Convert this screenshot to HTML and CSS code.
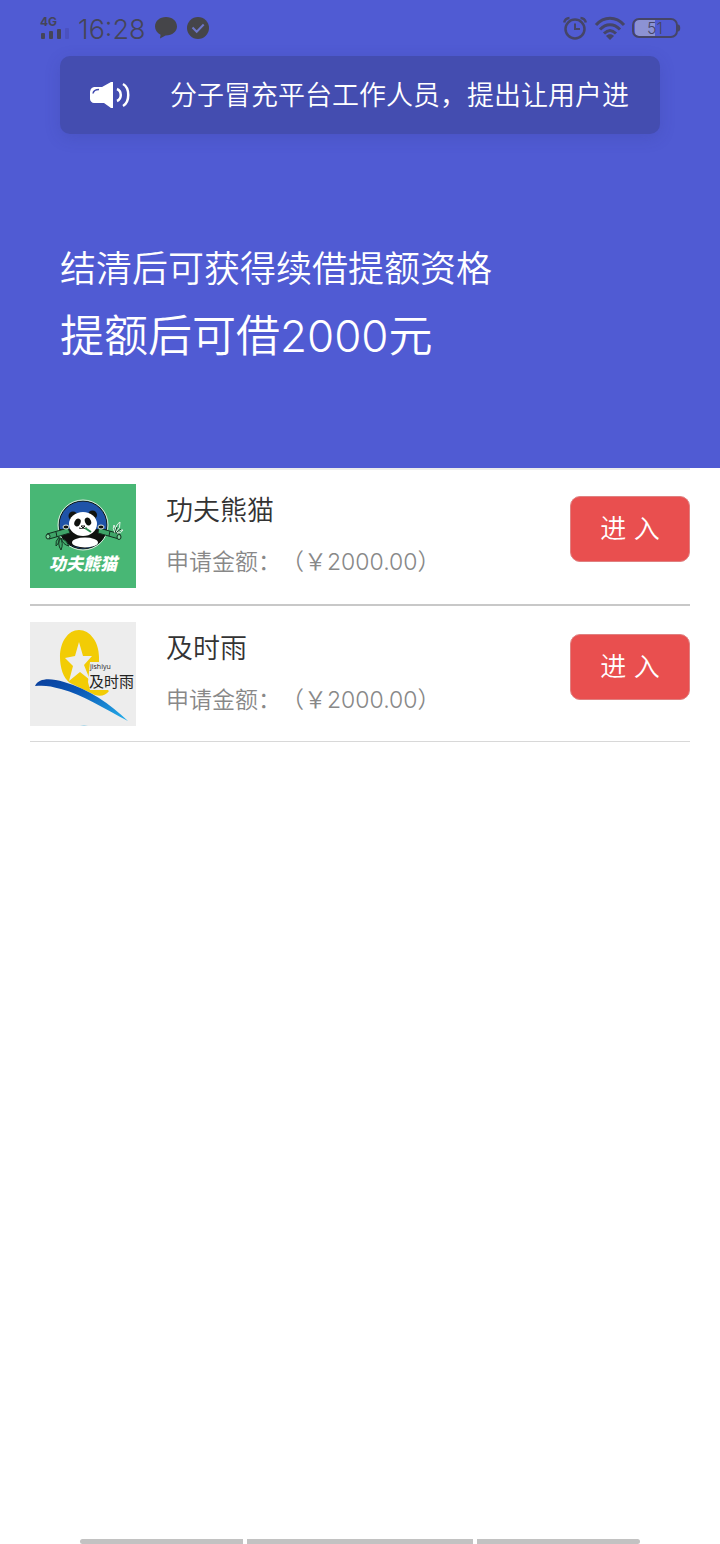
FILE: index.html
```html
<!DOCTYPE html>
<html lang="zh-CN">
<head>
  <meta charset="UTF-8">
  <meta name="viewport" content="width=device-width, initial-scale=1">
  <title>借款</title>
  <link rel="stylesheet" href="styles.css">
</head>
<body>
  <header class="hero">
    <div class="status-bar">
      <div class="status-left">
        <div class="signal">
          <span class="network">4G</span>
          <svg width="30" height="12" viewBox="0 0 30 12">
            <g fill="#454558">
              <rect x="1" y="5" width="4" height="6" rx="1"/>
              <rect x="9" y="3" width="4" height="8" rx="1"/>
              <rect x="17" y="1" width="4" height="10" rx="1"/>
            </g>
            <rect x="25" y="0" width="4" height="11" rx="1" fill="#4a51c0"/>
          </svg>
        </div>
        <span class="time">16:28</span>
        <svg width="24" height="24" viewBox="0 0 24 24">
          <path fill="#454549" d="M12 1C5.600 1 1 5 1 10.500c0 3.600 2.200 6.600 5.600 8.200L6 22.500l5.500-3.100C18.300 19.500 23 15.500 23 10.500 23 5 18.400 1 12 1z"/>
        </svg>
        <svg width="24" height="24" viewBox="0 0 24 24">
          <circle cx="12" cy="12" r="11" fill="#454549"/>
          <path d="M6.500 11.500l4.200 4.300 7-7.300" fill="none" stroke="#6d76c8" stroke-width="2"/>
        </svg>
      </div>
      <div class="status-right">
        <svg width="26" height="26" viewBox="0 0 26 26" fill="none" stroke="#454567">
          <circle cx="13" cy="14" r="9.500" stroke-width="2.500"/>
          <path d="M13 8.500V14h5" stroke-width="2"/>
          <path d="M2.200 7.500C2.800 4.800 5 3.200 7.500 3M18.500 3c2.500.2 4.700 1.800 5.300 4.500" stroke-width="2.500"/>
        </svg>
        <svg width="32" height="26" viewBox="0 0 32 26" fill="none" stroke="#454567" stroke-width="3">
          <path d="M2 10C10 1 22 1 30 10"/>
          <path d="M6 14.500c6-6.500 14-6.500 20 0"/>
          <path d="M10 18.500c4-4 8-4 12 0"/>
          <path d="M12 21c2-2.500 6-2.500 8 0L16 25z" fill="#454567" stroke="none"/>
        </svg>
        <svg width="50" height="24" viewBox="0 0 50 24">
          <path d="M7 4h16v16H7q-4 0-4-4V8q0-4 4-4z" fill="#8c92d4"/>
          <rect x="1" y="3" width="44" height="18" rx="6" fill="none" stroke="#454567" stroke-width="2"/>
          <path d="M46 8.500c3 0 3 7 0 7z" fill="#454567"/>
          <text x="23" y="18" class="battery-text">51</text>
        </svg>
      </div>
    </div>

    <div class="notice">
      <svg class="speaker" width="42" height="28" viewBox="0 0 42 28">
        <path fill="#fff" d="M23 0v26h-2l-7-5H4c-2 0-4-2-4-4v-6c0-4 2-6 5-6h7l9-5z"/>
        <path d="M3 11.500C3.500 8.500 5 7.500 9 7.500" fill="none" stroke="#444db0" stroke-width="1.500"/>
        <path d="M27 7c5 2 5 10 0 12M33 2c7 4 7 18 0 22" fill="none" stroke="#fff" stroke-width="2.500"/>
      </svg>
      <div class="notice-text">分子冒充平台工作人员，提出让用户进</div>
    </div>

    <div class="hero-text">
      <p class="hero-sub">结清后可获得续借提额资格</p>
      <p class="hero-title">提额后可借2000元</p>
    </div>
  </header>

  <main class="list">
    <section class="item">
      <svg class="logo" width="106" height="104" viewBox="0 0 106 104">
        <rect width="106" height="104" fill="#48b775"/>
        <circle cx="53" cy="41" r="24" fill="#1f53a8" stroke="#10120f" stroke-width="1"/>
        <circle cx="53" cy="41" r="25" fill="none" stroke="#dce8df" stroke-width="1"/>
        <path d="M30 45h46c1 10-10 19-23 19S29 55 30 45z" fill="#10120f"/>
        <ellipse cx="55" cy="58.500" rx="13" ry="5" fill="#fff"/>
        <g stroke="#12301f" stroke-width="1">
          <path d="M17 50l21-6 2 5-21 6z" fill="#3fa568"/>
          <path d="M69 44l21 6-1 5-21-6z" fill="#3fa568"/>
          <path d="M26 48l1 5M80 47l-1 5" fill="none"/>
          <ellipse cx="18" cy="52.500" rx="2" ry="2.500" fill="#7cd39b"/>
          <ellipse cx="89" cy="53" rx="2" ry="2.500" fill="#7cd39b"/>
        </g>
        <ellipse cx="36" cy="43" rx="3" ry="2" fill="#10120f" stroke="#dce8df"/>
        <ellipse cx="71" cy="43" rx="3" ry="2" fill="#10120f" stroke="#dce8df"/>
        <circle cx="43" cy="32" r="4.500" fill="#10120f"/>
        <circle cx="62.500" cy="31" r="4.500" fill="#10120f"/>
        <ellipse cx="53" cy="40" rx="14" ry="12" fill="#fff"/>
        <ellipse cx="47.500" cy="38.500" rx="3" ry="4" fill="#10120f" transform="rotate(25 47.500 38.500)"/>
        <ellipse cx="58" cy="37.500" rx="3" ry="4" fill="#10120f" transform="rotate(-25 58 37.500)"/>
        <path d="M51 42h4l-2 2zM49 44q3 1 4 0 2 1 4 0" fill="none" stroke="#10120f"/>
        <path d="M55 44l6 4" stroke="#2b8c50" stroke-width="2"/>
        <g fill="#3fa568" stroke="#163a25" stroke-width="1">
          <path d="M29 53q-4 4-3 9 4-3 3-9zM30 54q-3 6 1 12 3-7-1-12zM31 54q2 7 8 8-2-6-8-8z"/>
        </g>
        <g fill="#48b775" stroke="#e2efe5">
          <path d="M85 49q-3-5-1-8 3 4 1 8zM86 48q-1-7 4-10 1 6-4 10zM87 49q3-4 6-3-2 4-6 3z"/>
          <path d="M85 49l2-6M87 48l4-3" stroke="#163a25"/>
        </g>
        <text x="19" y="86" class="panda-text">功夫熊猫</text>
      </svg>
      <div class="info">
        <h2 class="name">功夫熊猫</h2>
        <p class="amount">申请金额：（￥2000.00）</p>
      </div>
      <button class="enter" type="button">进 入</button>
    </section>

    <section class="item">
      <svg class="logo" width="106" height="104" viewBox="0 0 106 104">
        <defs>
          <linearGradient id="wave" x1="0" x2="1" y1="0" y2="1">
            <stop offset="0" stop-color="#0b3f9b"/>
            <stop offset=".35" stop-color="#0a55b4"/>
            <stop offset="1" stop-color="#25b1ec"/>
          </linearGradient>
        </defs>
        <rect width="106" height="104" fill="#ededed"/>
        <path d="M49 8c11 0 20 12 20 27v26l10 8c-3 4-8 6-14 4L40 61c-7-5-10-16-10-26C30 20 38 8 49 8z" fill="#f2cc05"/>
        <path d="M49 20l4 14h9l-8 9 6 15-10-8-11 9 4-15-8-8 10-2z" fill="#ededed"/>
        <path d="M60 40h44v28H60l-2-8z" fill="#ededed"/>
        <path d="M5 64c4-8 15-8 29-4 25 7 46 22 64 39C75 87 53 73 31 67c-10-3-17-4-26-3z" fill="url(#wave)"/>
        <path d="M50 104q4-1 8 0z" fill="#6fc3e4"/>
        <text x="60" y="47" class="rain-pinyin">jishiyu</text>
        <text x="59" y="65" class="rain-text">及时雨</text>
      </svg>
      <div class="info">
        <h2 class="name">及时雨</h2>
        <p class="amount">申请金额：（￥2000.00）</p>
      </div>
      <button class="enter" type="button">进 入</button>
    </section>
  </main>

  <footer class="gesture-bar">
    <span class="side"></span>
    <span class="middle"></span>
    <span class="side"></span>
  </footer>
</body>
</html>
```
FILE: styles.css
```css
:root {
  --primary: #505bd3;
  --notice-bg: #444db0;
  --danger: #e94f4f;
  --line: #c8c8c8;
}

* {
  box-sizing: border-box;
}

body {
  margin: 0;
  min-height: 100vh;
  display: flex;
  flex-direction: column;
  background: #fff;
  color: #333;
  font-family: Inter, "Noto Sans CJK SC", sans-serif;
  font-weight: 350;
  text-spacing-trim: space-all;
}

h2, p {
  margin: 0;
  font-weight: inherit;
}

.hero {
  background: var(--primary);
  color: #fff;
  padding-bottom: 100px;
}

/* status bar */
.status-bar {
  height: 56px;
  padding: 0 38px 0 40px;
  display: flex;
  justify-content: space-between;
  align-items: center;
  color: #454558;
}

.status-left,
.status-right {
  display: flex;
  align-items: center;
}

.status-left {
  gap: 8px;
}

.status-right {
  gap: 6px;
}

.signal {
  display: flex;
  flex-direction: column;
  width: 30px;
}

.network {
  font-size: 12px;
  line-height: 12px;
  font-weight: 700;
}

.time {
  font-size: 27px;
  line-height: 32px;
  padding-top: 4px;
}

.battery-text {
  font-family: Inter, sans-serif;
  font-size: 16px;
  fill: #454567;
  text-anchor: middle;
}

/* scrolling notice */
.notice {
  margin: 0 60px;
  height: 78px;
  padding: 2px 30px 0;
  display: flex;
  align-items: center;
  gap: 38px;
  background: var(--notice-bg);
  border-radius: 10px;
  box-shadow: 0 4px 16px rgba(50, 55, 140, 0.2);
}

.speaker {
  flex: none;
}

.notice-text {
  flex: 1;
  min-width: 0;
  overflow: hidden;
  white-space: nowrap;
  font-size: 27px;
  line-height: 40px;
}

.hero-text {
  padding: 107px 60px 0;
}

.hero-sub {
  font-size: 36px;
  line-height: 56px;
}

.hero-title {
  margin-top: 7px;
  font-size: 44px;
  line-height: 64px;
}

/* loan list */
.list {
  flex: 1;
  margin: 0 30px;
  border-top: 2px solid #ececec;
}

.item {
  display: flex;
  align-items: flex-start;
  padding: 14px 0 16px;
  border-bottom: 2px solid var(--line);
}

.item + .item {
  padding: 16px 0 15px;
  border-bottom: 1px solid #d8d8d8;
}

.logo {
  flex: none;
}

.info {
  flex: 1;
  padding: 7px 0 0 30px;
}

.name {
  font-size: 27px;
  line-height: 40px;
}

.amount {
  margin-top: 14px;
  font-size: 23px;
  line-height: 34px;
  color: #888;
}

.enter {
  width: 120px;
  height: 66px;
  margin-top: 12px;
  padding: 0 0 6px;
  border: 1px solid #e08080;
  border-radius: 10px;
  background: var(--danger);
  color: #fff;
  font: inherit;
  font-size: 26px;
  cursor: pointer;
}

.panda-text {
  font-family: "Noto Sans CJK SC", sans-serif;
  font-size: 17px;
  font-weight: 900;
  font-style: italic;
  fill: #fff;
}

.rain-pinyin {
  font-family: "Open Sans", sans-serif;
  font-size: 7px;
  font-weight: 400;
  fill: #222;
}

.rain-text {
  font-family: "Noto Sans CJK SC", sans-serif;
  font-size: 15px;
  font-weight: 400;
  fill: #222;
}

/* system gesture hints */
.gesture-bar {
  display: flex;
  gap: 4px;
  padding: 0 80px;
}

.gesture-bar span {
  height: 5px;
  background: #c2c2c2;
}

.side {
  flex: 163;
}

.middle {
  flex: 226;
}

.side:first-child {
  border-radius: 3px 0 0 3px;
}

.side:last-child {
  border-radius: 0 3px 3px 0;
}
```
